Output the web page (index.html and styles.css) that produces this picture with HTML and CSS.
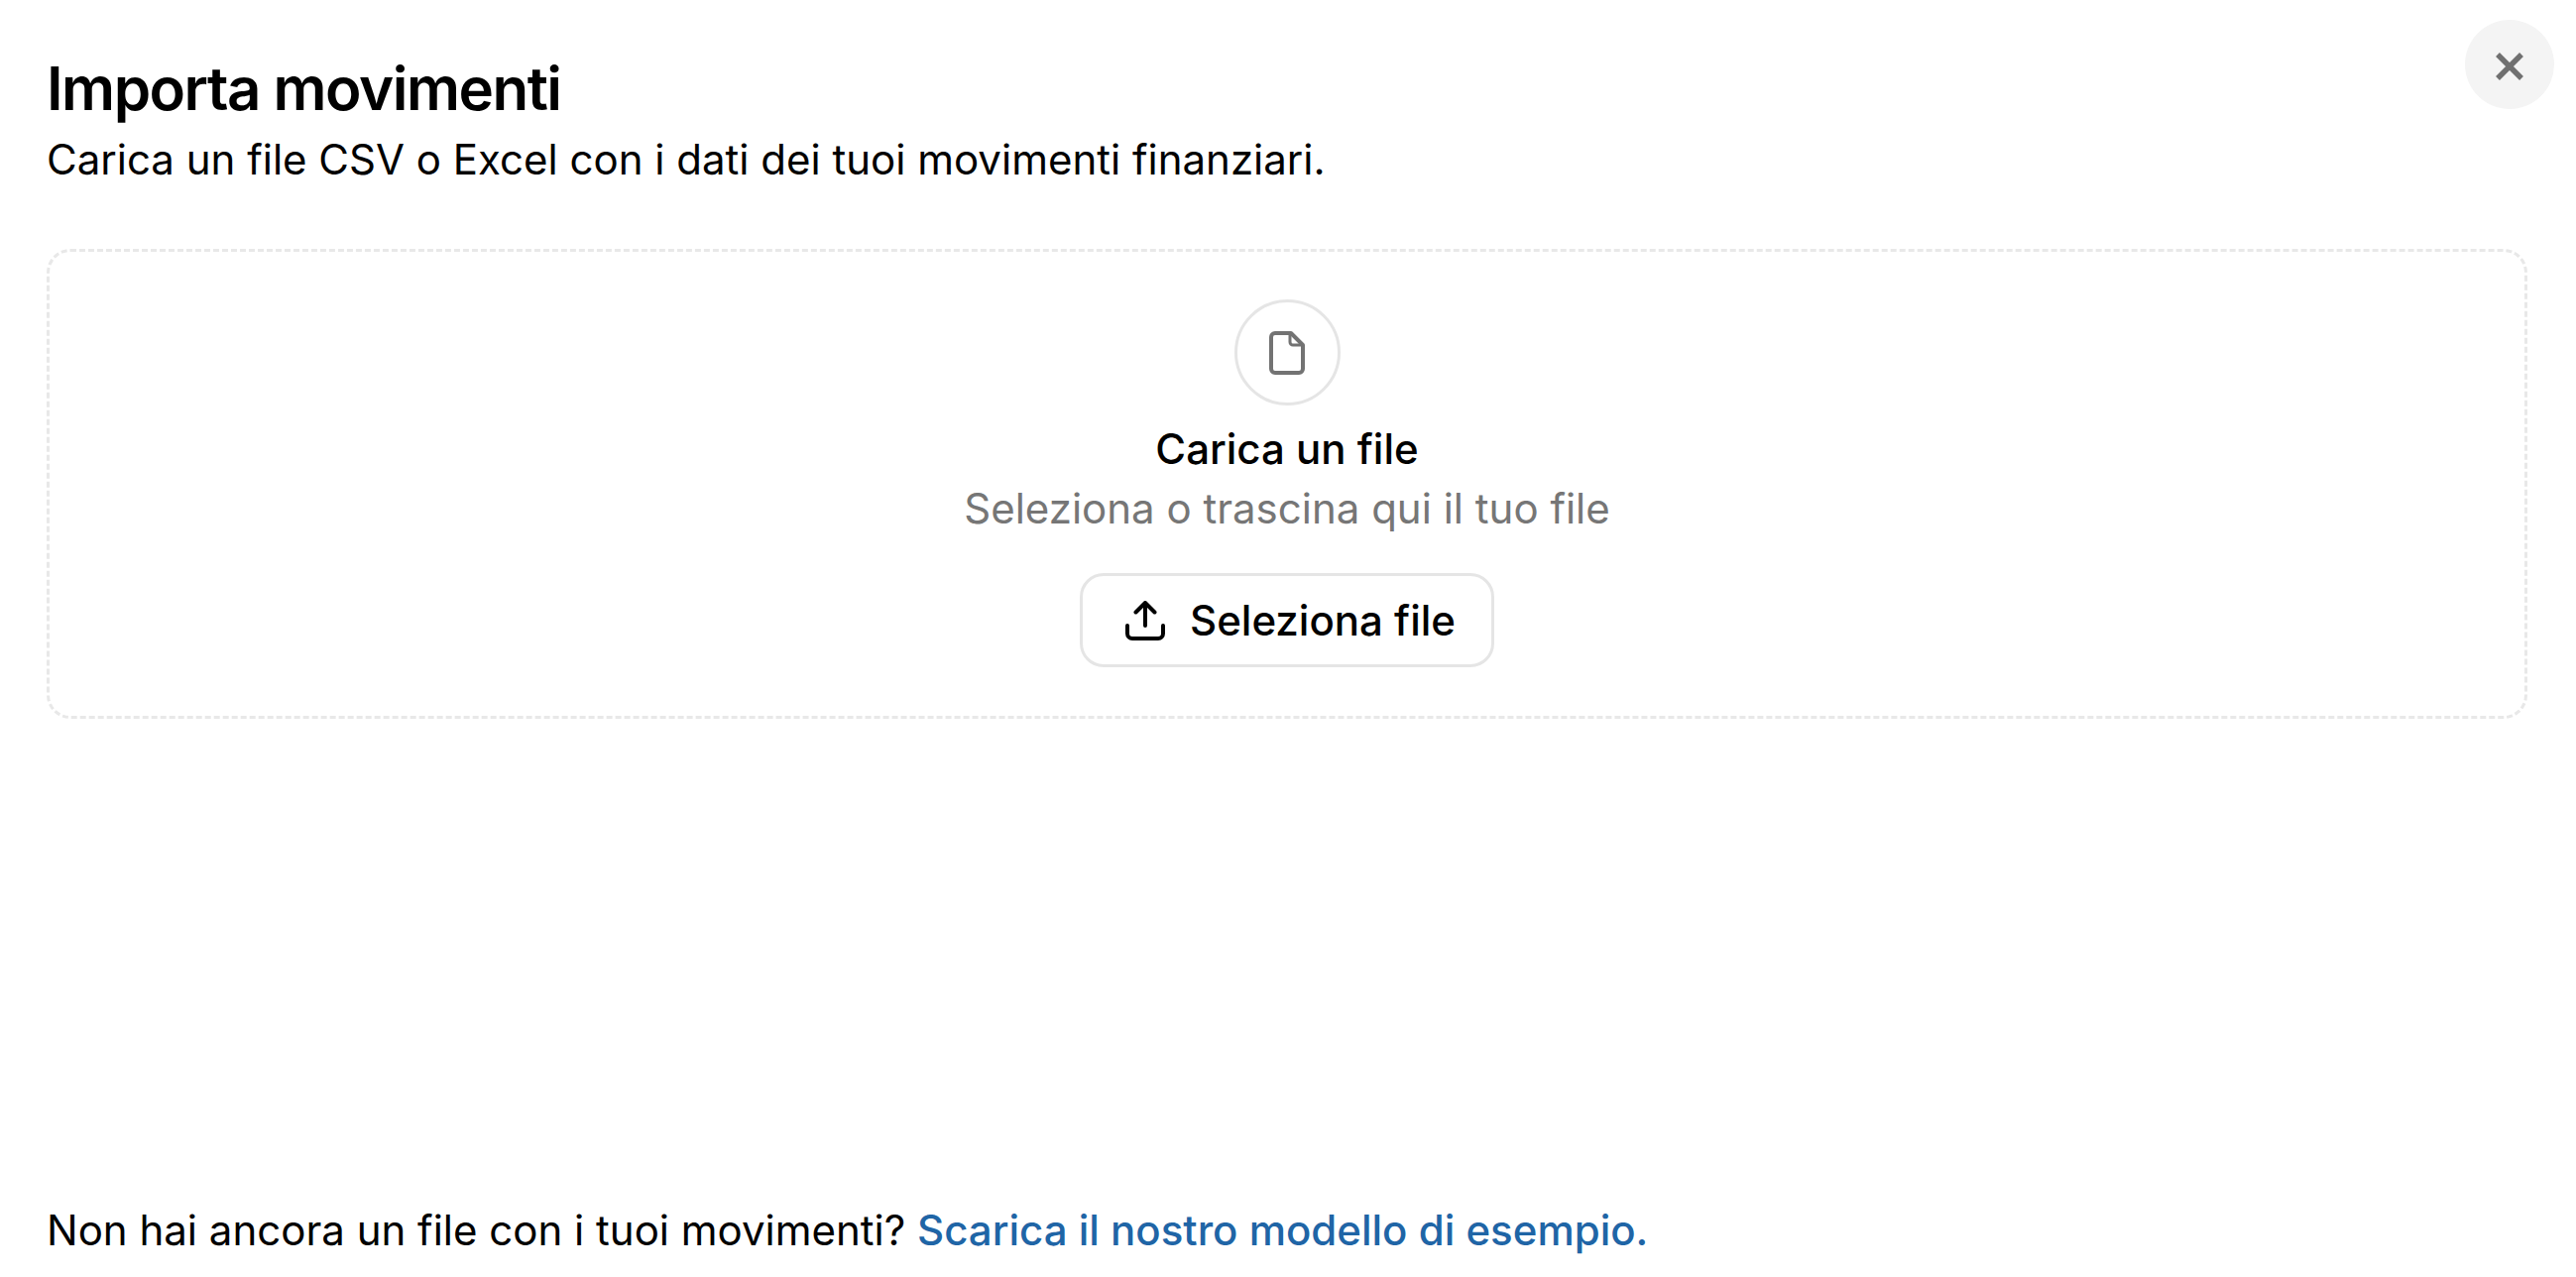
FILE: index.html
```html
<!DOCTYPE html>
<html lang="it">

<head>
    <meta charset="UTF-8">
    <title>Importa movimenti</title>
    <link rel="stylesheet" href="styles.css">
</head>

<body>
    <div class="modal">
        <button class="close-btn" aria-label="Chiudi">
            <svg class="close-icon" width="30" height="30" viewBox="0 0 30 30" fill="none" stroke="currentColor" stroke-width="5.5">
                <path d="M3 3L27 27M27 3L3 27" />
            </svg>
        </button>

        <div class="header">
            <h1 class="title">Importa movimenti</h1>
            <p class="subtitle">Carica un file CSV o Excel con i dati dei tuoi movimenti finanziari.</p>
        </div>

        <div class="dropzone">
            <div class="file-icon">
                <svg width="36" height="44" viewBox="0 0 36 44" fill="none" stroke="currentColor" stroke-width="4" stroke-linejoin="round">
                    <path d="M6 2H22L34 14V38a4 4 0 0 1-4 4H6a4 4 0 0 1-4-4V6a4 4 0 0 1 4-4Z" />
                    <path d="M21 3V11a3 3 0 0 0 3 3H33" stroke-width="3" />
                </svg>
            </div>
            <div class="drop-title">Carica un file</div>
            <div class="drop-hint">Seleziona o trascina qui il tuo file</div>
            <button class="select-btn">
                <svg width="40" height="40" viewBox="0 0 40 40" fill="none" stroke="currentColor" stroke-width="4" stroke-linecap="round" stroke-linejoin="round">
                    <path d="M20 25V2.500M10.500 11.500L20 2L29.500 11.500" />
                    <path d="M2 25V33a5 5 0 0 0 5 5H33a5 5 0 0 0 5-5V25" />
                </svg>
                Seleziona file
            </button>
        </div>

        <p class="footer">Non hai ancora un file con i tuoi movimenti? <a href="#" class="footer-link">Scarica il nostro modello di esempio.</a></p>
    </div>
</body>

</html>
```

FILE: styles.css
```css
* {
    margin: 0;
    padding: 0;
    box-sizing: border-box;
}

html,
body {
    height: 100%;
}

body {
    background: #fff;
    color: #000;
    font-family: Inter, "Liberation Sans", sans-serif;
}

.modal {
    position: relative;
    display: flex;
    flex-direction: column;
    height: 100%;
    padding: 50px 49px 17px 47px;
}

.close-btn {
    position: absolute;
    top: 20px;
    right: 22px;
    display: flex;
    align-items: center;
    justify-content: center;
    width: 90px;
    height: 90px;
    border: 0;
    border-radius: 50%;
    background: #f4f4f4;
    color: #707070;
}

.close-icon {
    margin-top: 3px;
}

.title {
    font-size: 60px;
    line-height: 78px;
    font-weight: 600;
    letter-spacing: -1.5px;
}

.subtitle {
    margin-top: 6px;
    font-size: 42px;
    line-height: 54px;
}

.dropzone {
    display: flex;
    flex-direction: column;
    align-items: center;
    height: 474px;
    margin-top: 63px;
    padding-top: 48px;
    border: 3px dashed #e8e8e8;
    border-radius: 24px;
}

.file-icon {
    display: flex;
    align-items: center;
    justify-content: center;
    width: 107px;
    height: 107px;
    border: 3px solid #e5e5e5;
    border-radius: 50%;
    color: #737373;
}

.drop-title {
    margin-top: 14px;
    font-size: 42px;
    line-height: 60px;
    font-weight: 500;
}

.drop-hint {
    font-size: 42px;
    line-height: 60px;
    color: #767676;
}

.select-btn {
    display: flex;
    align-items: center;
    gap: 25px;
    width: 418px;
    height: 95px;
    margin-top: 35px;
    padding-left: 43px;
    border: 3px solid #e5e5e5;
    border-radius: 24px;
    background: #fff;
    color: #000;
    font-family: inherit;
    font-size: 42px;
    font-weight: 500;
}

.footer {
    margin-top: auto;
    font-size: 42px;
    line-height: 60px;
}

.footer-link {
    color: #1f65a6;
    font-weight: 500;
    text-decoration: none;
}
```
